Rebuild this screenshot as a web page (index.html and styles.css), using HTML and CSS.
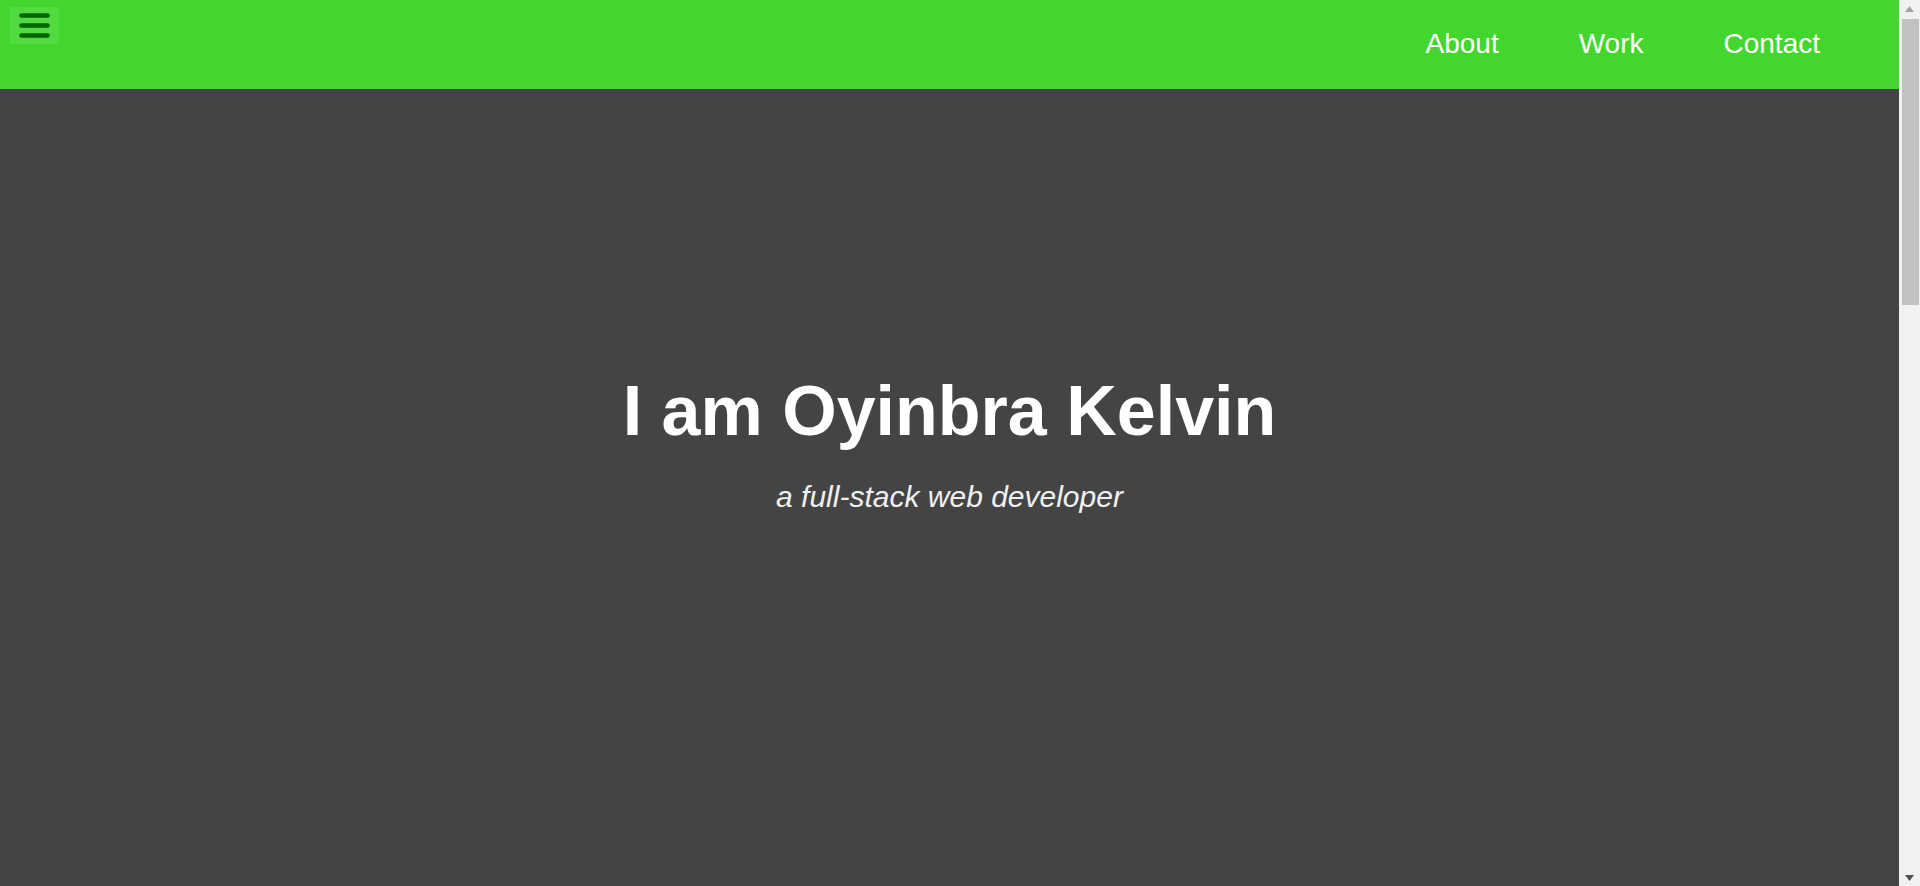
FILE: index.html
```html
<!DOCTYPE html>
<html lang="en">
<head>
<meta charset="utf-8">
<title>Oyinbra Kelvin</title>
<link rel="stylesheet" href="styles.css">
</head>
<body>
<div class="page">
  <header class="topbar">
    <button class="menu-btn" aria-label="Menu">
      <svg width="31" height="25" viewBox="0 0 31 25">
        <line x1="2.5" y1="2.5" x2="28.5" y2="2.5"/>
        <line x1="2.5" y1="12.5" x2="28.5" y2="12.5"/>
        <line x1="2.5" y1="22.5" x2="28.5" y2="22.5"/>
      </svg>
    </button>
    <nav class="nav">
      <a href="#about">About</a>
      <a href="#work">Work</a>
      <a href="#contact">Contact</a>
    </nav>
  </header>
  <main>
    <section class="hero">
      <h1 class="hero-title">I am Oyinbra Kelvin</h1>
      <p class="hero-sub">a full-stack web developer</p>
    </section>
    <section class="more" id="about"></section>
  </main>
</div>
<div class="scrollbar" aria-hidden="true">
  <div class="sb-btn sb-up">
    <svg width="9" height="6" viewBox="0 0 9 6"><polygon points="4.5,0 9,6 0,6"/></svg>
  </div>
  <div class="sb-thumb"></div>
  <div class="sb-track"></div>
  <div class="sb-btn sb-down">
    <svg width="9" height="6" viewBox="0 0 9 6"><polygon points="0,0 9,0 4.5,6"/></svg>
  </div>
</div>
</body>
</html>
```

FILE: styles.css
```css
html, body {
  margin: 0;
  padding: 0;
}
body {
  background: #444444;
  font-family: "Liberation Sans", Arial, sans-serif;
  color: #ffffff;
}
.page {
  margin-right: 21px;
}
.topbar {
  height: 89px;
  background: #43d62f;
  display: flex;
  justify-content: space-between;
  align-items: flex-start;
}
.menu-btn {
  margin: 7px 0 0 10px;
  width: 49px;
  height: 37px;
  padding: 0;
  border: none;
  background: #52db3f;
  display: flex;
  align-items: center;
  justify-content: center;
}
.menu-btn svg line {
  stroke: #006400;
  stroke-width: 4.6;
  stroke-linecap: round;
}
.nav {
  display: flex;
  gap: 80px;
  padding: 28px 79px 0 0;
}
.nav a {
  color: #ffffff;
  text-decoration: none;
  font-size: 28px;
  line-height: 32px;
}
.hero {
  height: 797px;
  box-sizing: border-box;
  padding-top: 282px;
  text-align: center;
}
.hero-title {
  margin: 0;
  font-size: 70px;
  line-height: 80px;
  font-weight: bold;
  color: #ffffff;
}
.hero-sub {
  margin: 28px 0 0;
  font-size: 30px;
  line-height: 36px;
  font-style: italic;
  color: #f0f0f0;
}
.more {
  height: 1764px;
}
.scrollbar {
  position: fixed;
  top: 0;
  right: 0;
  width: 21px;
  height: 100vh;
  background: #f1f1f1;
  display: flex;
  flex-direction: column;
  align-items: center;
}
.sb-btn {
  height: 19px;
  width: 21px;
  display: flex;
  justify-content: center;
}
.sb-up {
  align-items: flex-start;
  padding-top: 6px;
  box-sizing: border-box;
}
.sb-up polygon {
  fill: #a3a3a3;
}
.sb-down {
  align-items: flex-end;
  padding-bottom: 5px;
  box-sizing: border-box;
}
.sb-down polygon {
  fill: #505050;
}
.sb-thumb {
  width: 17px;
  height: 286px;
  background: #c1c1c1;
  margin-left: 1px;
}
.sb-track {
  flex: 1;
}
```
